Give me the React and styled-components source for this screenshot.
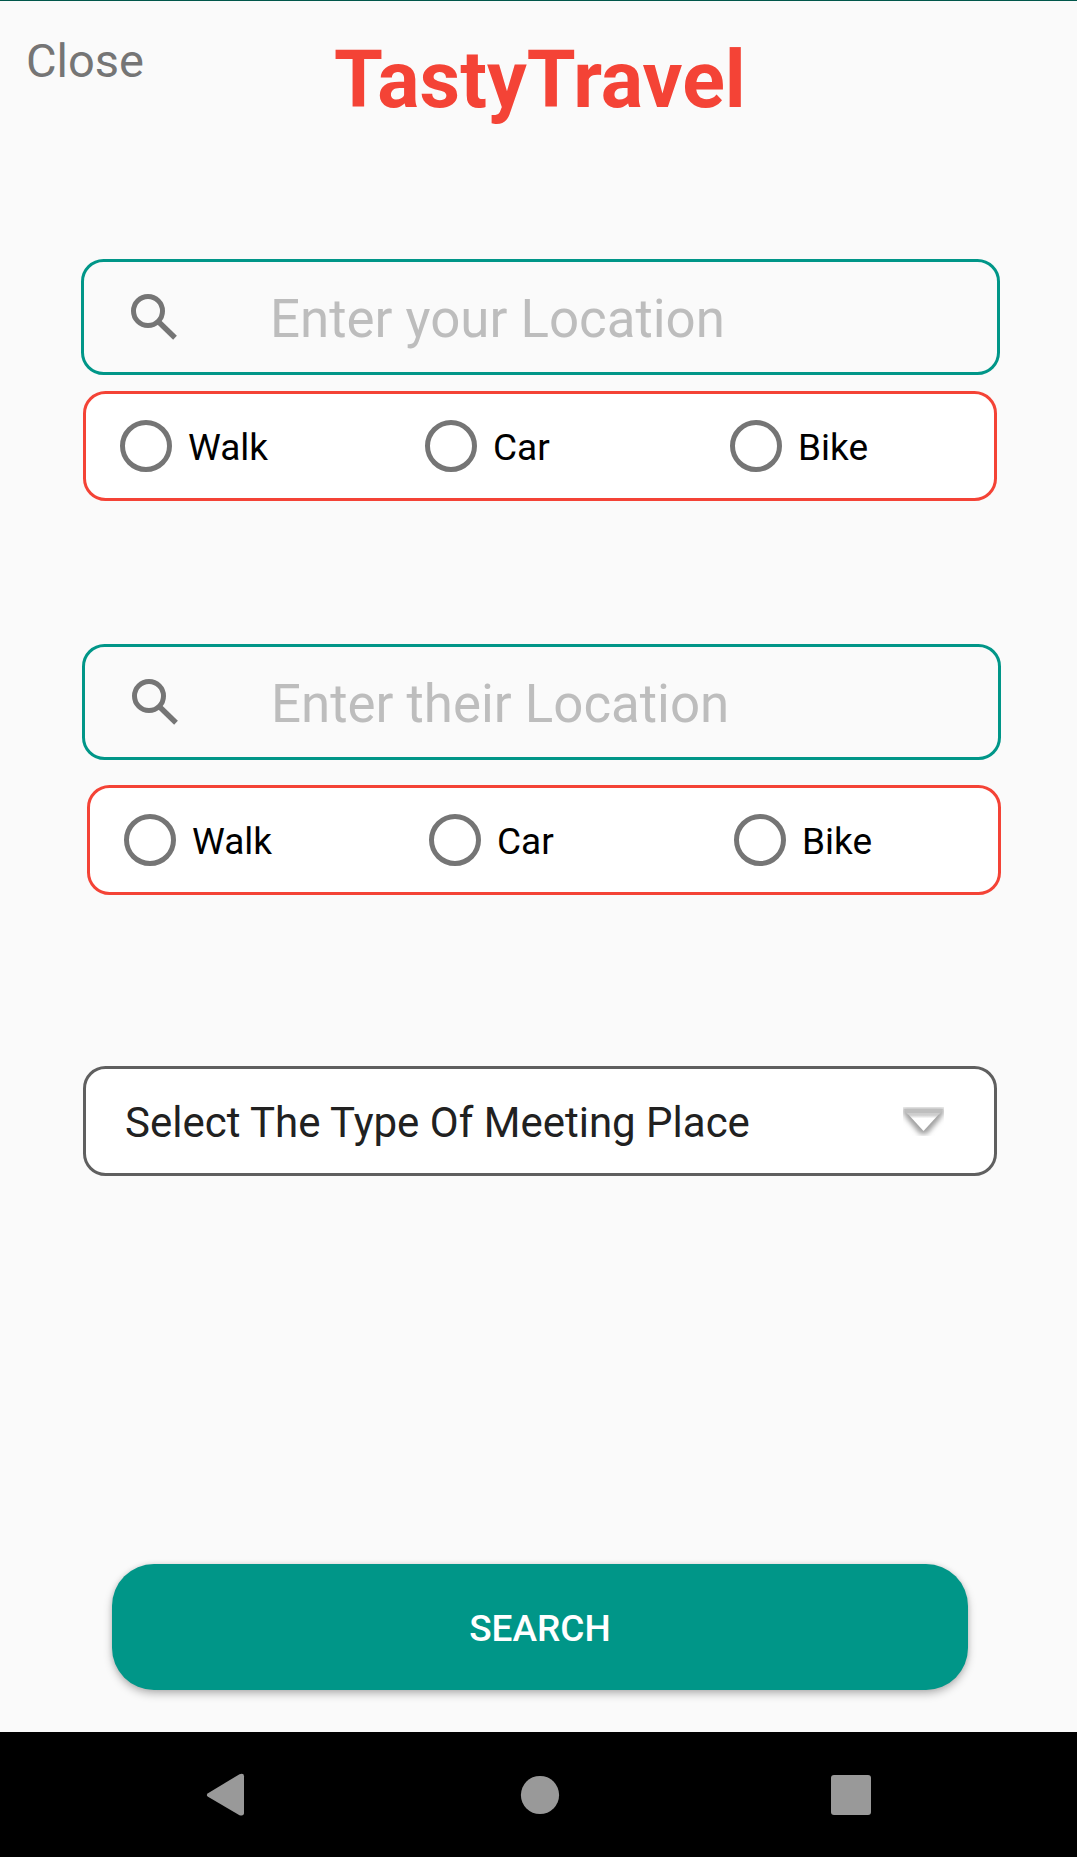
import React from "react";
import styled, { createGlobalStyle } from "styled-components";

const teal = "#009688";
const red = "#f44336";

const GlobalStyle = createGlobalStyle`
  *, *::before, *::after { box-sizing: border-box; }
  body { margin: 0; background: #fafafa; font-family: Roboto, "Noto Sans", sans-serif; }
  input, button { font: inherit; margin: 0; padding: 0; border: 0; background: none; }
`;

const Screen = styled.div`
  display: flex;
  flex-direction: column;
  width: 1077px;
  height: 1857px;
  background: #fafafa;
  border-top: 1px solid #00574b;
  overflow: hidden;
`;

const Header = styled.header`
  display: grid;
  grid-template-columns: 334px 1fr;
  align-items: start;
  height: 226px;
  padding-top: 32px;
`;

const CloseButton = styled.button`
  justify-self: start;
  margin-left: 26px;
  font-size: 47px;
  line-height: 56px;
  color: #757575;
`;

const Title = styled.h1`
  margin: 1px 0 0;
  font-size: 79px;
  font-weight: 700;
  line-height: 92px;
  letter-spacing: 0.05px;
  color: ${red};
`;

const Form = styled.main`
  flex: 1;
  display: flex;
  flex-direction: column;
  align-items: flex-start;
  padding-top: 32px;
`;

const Leg = styled.section`
  display: flex;
  flex-direction: column;
  gap: ${(p) => p.$gap}px;
  margin-bottom: ${(p) => p.$after}px;
`;

const SearchField = styled.label`
  display: flex;
  align-items: center;
  width: 919px;
  height: 116px;
  margin-left: ${(p) => p.$left}px;
  padding-left: 41px;
  border: 3px solid ${teal};
  border-radius: 22.5px;
`;

const LocationInput = styled.input`
  flex: 1;
  min-width: 0;
  margin-left: 89px;
  padding-top: 4px;
  font-size: 52.85px;
  line-height: 62px;
  outline: none;
  &::placeholder { color: #bdbdbd; opacity: 1; }
`;

const ModeGroup = styled.div`
  display: grid;
  grid-template-columns: repeat(3, 305px);
  align-items: center;
  width: 914px;
  height: 110px;
  margin-left: ${(p) => p.$left}px;
  padding-left: 34px;
  overflow: hidden;
  background: #fff;
  border: 3px solid ${red};
  border-radius: 22.5px;
`;

const Mode = styled.label`
  display: flex;
  align-items: center;
  gap: 16px;
`;

const Radio = styled.input`
  appearance: none;
  width: 52px;
  height: 52px;
  border: 5px solid #757575;
  border-radius: 50%;
`;

const ModeName = styled.span`
  padding-top: 3px;
  font-size: 37px;
  line-height: 43px;
  color: #000;
`;

const PlaceSelect = styled.div`
  display: flex;
  align-items: center;
  justify-content: space-between;
  width: 914px;
  height: 110px;
  margin-left: 83px;
  padding: 0 50px 0 39px;
  background: #fff;
  border: 3px solid #5f5f5f;
  border-radius: 22.5px;
`;

const PlaceLabel = styled.span`
  padding-top: 3px;
  font-size: 42px;
  line-height: 50px;
  color: #212121;
`;

const SearchButton = styled.button`
  width: 856px;
  height: 126px;
  margin: auto 0 42px 112px;
  padding-top: 3px;
  font-size: 37px;
  font-weight: 500;
  line-height: 43px;
  color: #fff;
  background: ${teal};
  border-radius: 42px;
  box-shadow: 0 4px 8px rgba(0, 0, 0, 0.26), 0 0 5px rgba(0, 0, 0, 0.1);
`;

const NavBar = styled.nav`
  display: grid;
  grid-template-columns: 248px 583px 1fr;
  align-items: center;
  height: 125px;
  padding-top: 1px;
  background: #000;
`;

const NavIcon = styled.svg`
  display: block;
  justify-self: ${(p) => p.$align || "start"};
  fill: #999;
`;

const Magnifier = styled.svg`
  flex: none;
`;

const MagnifierIcon = () => (
  <Magnifier width="56" height="48" viewBox="0 0 56 48" fill="none" stroke="#757575">
    <circle cx="23" cy="18" r="14.5" strokeWidth="5" />
    <path d="M33.5 28.8L50 44.8" strokeWidth="5.4" />
  </Magnifier>
);

const DropArrow = () => (
  <svg width="41" height="29" viewBox="0 0 41 29">
    <defs>
      <filter id="soft" x="-20%" y="-20%" width="140%" height="140%">
        <feGaussianBlur stdDeviation="2.6" />
      </filter>
      <linearGradient id="inner" x1="0" y1="0" x2="0" y2="1">
        <stop offset="0" stopColor="#fff" stopOpacity="0.15" />
        <stop offset="0.3" stopColor="#fff" />
      </linearGradient>
      <filter id="edge" x="-20%" y="-20%" width="140%" height="140%">
        <feGaussianBlur stdDeviation="0.7" />
      </filter>
    </defs>
    <path d="M-2 1.5H43L37 12L24 27H17L4 12Z" fill="#a0a0a0" filter="url(#soft)" />
    <path d="M1 2H40L37 7.5H4Z" fill="#bebebe" filter="url(#edge)" />
    <path d="M4 6H37L20.5 24Z" fill="url(#inner)" filter="url(#edge)" />
  </svg>
);

const modes = ["Walk", "Car", "Bike"];

function LegFields({ name, placeholder, fieldLeft, modeLeft, gap, after }) {
  return (
    <Leg $gap={gap} $after={after}>
      <SearchField $left={fieldLeft}>
        <MagnifierIcon />
        <LocationInput type="text" placeholder={placeholder} />
      </SearchField>
      <ModeGroup $left={modeLeft}>
        {modes.map((mode) => (
          <Mode key={mode}>
            <Radio type="radio" name={name} />
            <ModeName>{mode}</ModeName>
          </Mode>
        ))}
      </ModeGroup>
    </Leg>
  );
}

export default function App() {
  return (
    <>
      <GlobalStyle />
      <Screen>
        <Header>
          <CloseButton>Close</CloseButton>
          <Title>TastyTravel</Title>
        </Header>
        <Form>
          <LegFields name="yours" placeholder="Enter your Location" fieldLeft={81} modeLeft={83} gap={16} after={143} />
          <LegFields name="theirs" placeholder="Enter their Location" fieldLeft={82} modeLeft={87} gap={25} after={171} />
          <PlaceSelect>
            <PlaceLabel>Select The Type Of Meeting Place</PlaceLabel>
            <DropArrow />
          </PlaceSelect>
          <SearchButton>SEARCH</SearchButton>
        </Form>
        <NavBar>
          <NavIcon width="44" height="44" viewBox="0 0 44 44" $align="end">
            <path d="M4 20.2L35.5 1.2Q40 -0.4 40 3.2V39.8Q40 43.6 35.5 42.2L4 23.8Q1.6 22 4 20.2Z" />
          </NavIcon>
          <NavIcon width="40" height="40" viewBox="0 0 40 40" $align="center">
            <circle cx="20" cy="20" r="19.1" />
          </NavIcon>
          <NavIcon width="40" height="40" viewBox="0 0 40 40">
            <rect width="40" height="40" rx="3" />
          </NavIcon>
        </NavBar>
      </Screen>
    </>
  );
}
